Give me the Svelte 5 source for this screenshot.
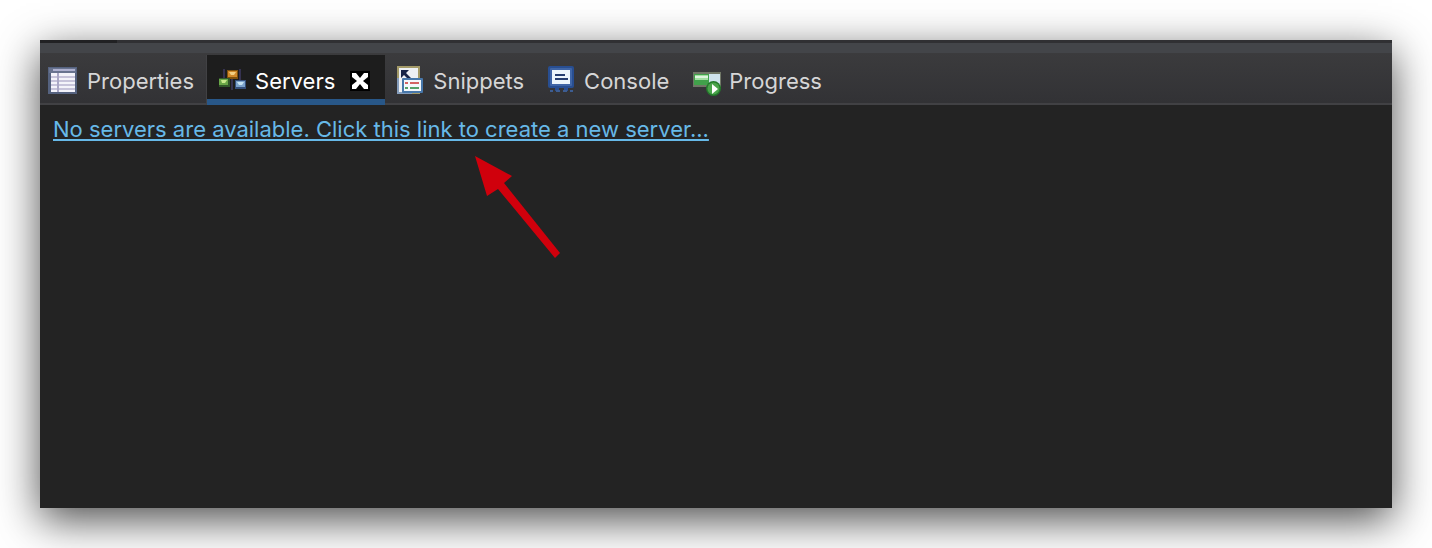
<script>
  const tabs = ['Properties', 'Servers', 'Snippets', 'Console', 'Progress'];
  let active = $state('Servers');
</script>

<main class="panel">
  <div class="sash"><span></span></div>
  <div class="tabs" role="tablist" aria-label="Views">
    {#each tabs as tab}
      <div class="tab" class:active={active === tab}>
        <button class="select" role="tab" aria-selected={active === tab} onclick={() => (active = tab)}>
          <svg class="icon" viewBox="0 0 32 32" aria-hidden="true">
            {#if tab === 'Properties'}
              <rect x="1" y="2" width="29" height="27" fill="#55627f" />
              <rect x="2" y="3" width="27" height="5" fill="#68738f" />
              <rect x="6" y="4" width="22" height="2" fill="#aeb1d0" />
              <rect x="4" y="8" width="24" height="19" fill="#f3f3fa" />
              <path d="M4 12h24M4 16h24M4 20h24M4 24h24" stroke="#c6c3da" stroke-width="2" />
              <path d="M11 8v19" stroke="#aaa8c6" stroke-width="2" />
            {:else if tab === 'Servers'}
              <path d="M9 4v15M17 12v13M25 4v14" stroke="#353250" stroke-width="2" />
              <rect x="12" y="5" width="11" height="9" fill="#80500b" />
              <rect x="13" y="6" width="9" height="6" fill="#d0892a" />
              <path d="M14 7h7l-2 3h-3z" fill="#f3cf82" />
              <rect x="4" y="13" width="11" height="9" fill="#31582a" />
              <rect x="4" y="14" width="9" height="6" fill="#6aa748" />
              <path d="M6 15h6l-2 3H7z" fill="#c8e98b" />
              <rect x="20" y="15" width="11" height="9" fill="#344f7c" />
              <rect x="21" y="16" width="9" height="6" fill="#7ba2cc" />
              <path d="M22 17h7l-2 3h-3z" fill="#c6e2f2" />
            {:else if tab === 'Snippets'}
              <rect x="4" y="1" width="23" height="28" fill="#a39a68" />
              <rect x="6" y="3" width="19" height="24" fill="#edf0f4" />
              <path d="M4 13h2v14h13v2H4z" fill="#859dbc" />
              <path d="M8 5h8l-3 3 6 6-2 2-6-6-3 3z" fill="#172447" />
              <rect x="9" y="13" width="21" height="15" rx="1" fill="#4777aa" />
              <rect x="11" y="15" width="17" height="11" fill="#f3f7fb" />
              <path d="M12 18h3M17 18h9" stroke="#d36363" stroke-width="2" />
              <path d="M12 23h3M17 23h9" stroke="#55a069" stroke-width="2" />
            {:else if tab === 'Console'}
              <rect x="4" y="1" width="26" height="22" rx="2" fill="#284e91" />
              <rect x="6" y="3" width="22" height="18" rx="1" fill="#3f65a6" />
              <rect x="8" y="5" width="18" height="14" fill="#edf6fc" />
              <path d="M11 10h10M11 14h13" stroke="#273f70" stroke-width="2" />
              <path d="M11 23h4v3h-4zM20 23h4v3h-4z" fill="#284e91" />
              <path d="M6 26h3M12 26h4M19 26h4M26 26h3" stroke="#3d5d92" stroke-width="2" />
            {:else}
              <rect x="4" y="7" width="28" height="15" fill="#707767" />
              <rect x="5" y="9" width="15" height="11" fill="#41a14b" />
              <rect x="6" y="10" width="13" height="5" fill="#a1dfa1" />
              <rect x="6" y="11" width="13" height="2" fill="#dcf4dc" />
              <rect x="20" y="9" width="11" height="11" fill="#cfe3ed" />
              <circle cx="24.500" cy="23.500" r="7.500" fill="#237a2b" />
              <circle cx="24.500" cy="23.500" r="6" fill="#4aa34b" />
              <path d="M23 19l6 5-6 5z" fill="#fff" />
            {/if}
          </svg>
          <span>{tab}</span>
        </button>
        {#if active === tab}
          <button class="close" aria-label={`Close ${tab}`}>
            <svg viewBox="0 0 20 20" aria-hidden="true">
              <path d="M0 0h20v20H0z" fill="#000" />
              <path d="M2 2h4l4 5 4-5h4v4l-5 4 5 4v4h-4l-4-5-4 5H2v-4l5-4-5-4z" fill="#fff" />
            </svg>
          </button>
        {/if}
      </div>
    {/each}
  </div>
  <section class="content" role="tabpanel" aria-label={active}>
    <a href="#new-server">No servers are available. Click this link to create a new server...</a>
    <svg class="arrow" viewBox="0 0 86 104" aria-hidden="true">
      <path d="M0 0L37 20 29 27 85 97 80 102 23 33 12 40z" fill="#d0000c" />
    </svg>
  </section>
</main>

<style>
  :global(body) {
    background: #fff;
  }
  .panel {
    box-sizing: border-box;
    display: flex;
    flex-direction: column;
    min-height: calc(100vh - 80px);
    margin: 40px;
    background: #232323;
    box-shadow: 0 12px 40px rgba(0, 0, 0, 0.7);
    font-family: Inter, sans-serif;
    font-size: 22px;
    line-height: 28px;
  }
  .sash {
    height: 10px;
    border-top: 3px solid #303033;
    background: #434549;
  }
  .sash span {
    display: block;
    width: 77px;
    height: 3px;
    margin-top: -3px;
    background: #212123;
  }
  .tabs {
    display: flex;
    height: 50px;
    border-bottom: 2px solid #414144;
    background: linear-gradient(#3b3b3d, #323235);
  }
  .tab {
    box-sizing: border-box;
    display: flex;
    align-items: center;
    height: 50px;
    margin-top: 2px;
    padding: 2px 12px 0 8px;
    color: #d6d6d7;
  }
  .tab:first-child {
    padding-left: 7px;
    border-right: 1px solid #414144;
  }
  .tab.active {
    padding: 8px 15px 0 8px;
    border-bottom: 6px solid #285788;
    background: #1d1d1d;
    color: #fff;
  }
  button {
    padding: 0;
    border: 0;
    background: none;
    color: inherit;
    font: inherit;
  }
  .select {
    display: flex;
    align-items: center;
    gap: 8px;
  }
  .icon {
    width: 32px;
    height: 32px;
  }
  .close {
    margin-left: 15px;
  }
  .close svg {
    display: block;
    width: 20px;
    height: 20px;
  }
  .content {
    position: relative;
    flex: 1;
    padding: 10px 13px;
  }
  a {
    color: #67b9e8;
    text-decoration-thickness: 2px;
    text-underline-offset: 2px;
  }
  .arrow {
    position: absolute;
    top: 51px;
    left: 435px;
    width: 86px;
    height: 104px;
  }
</style>
